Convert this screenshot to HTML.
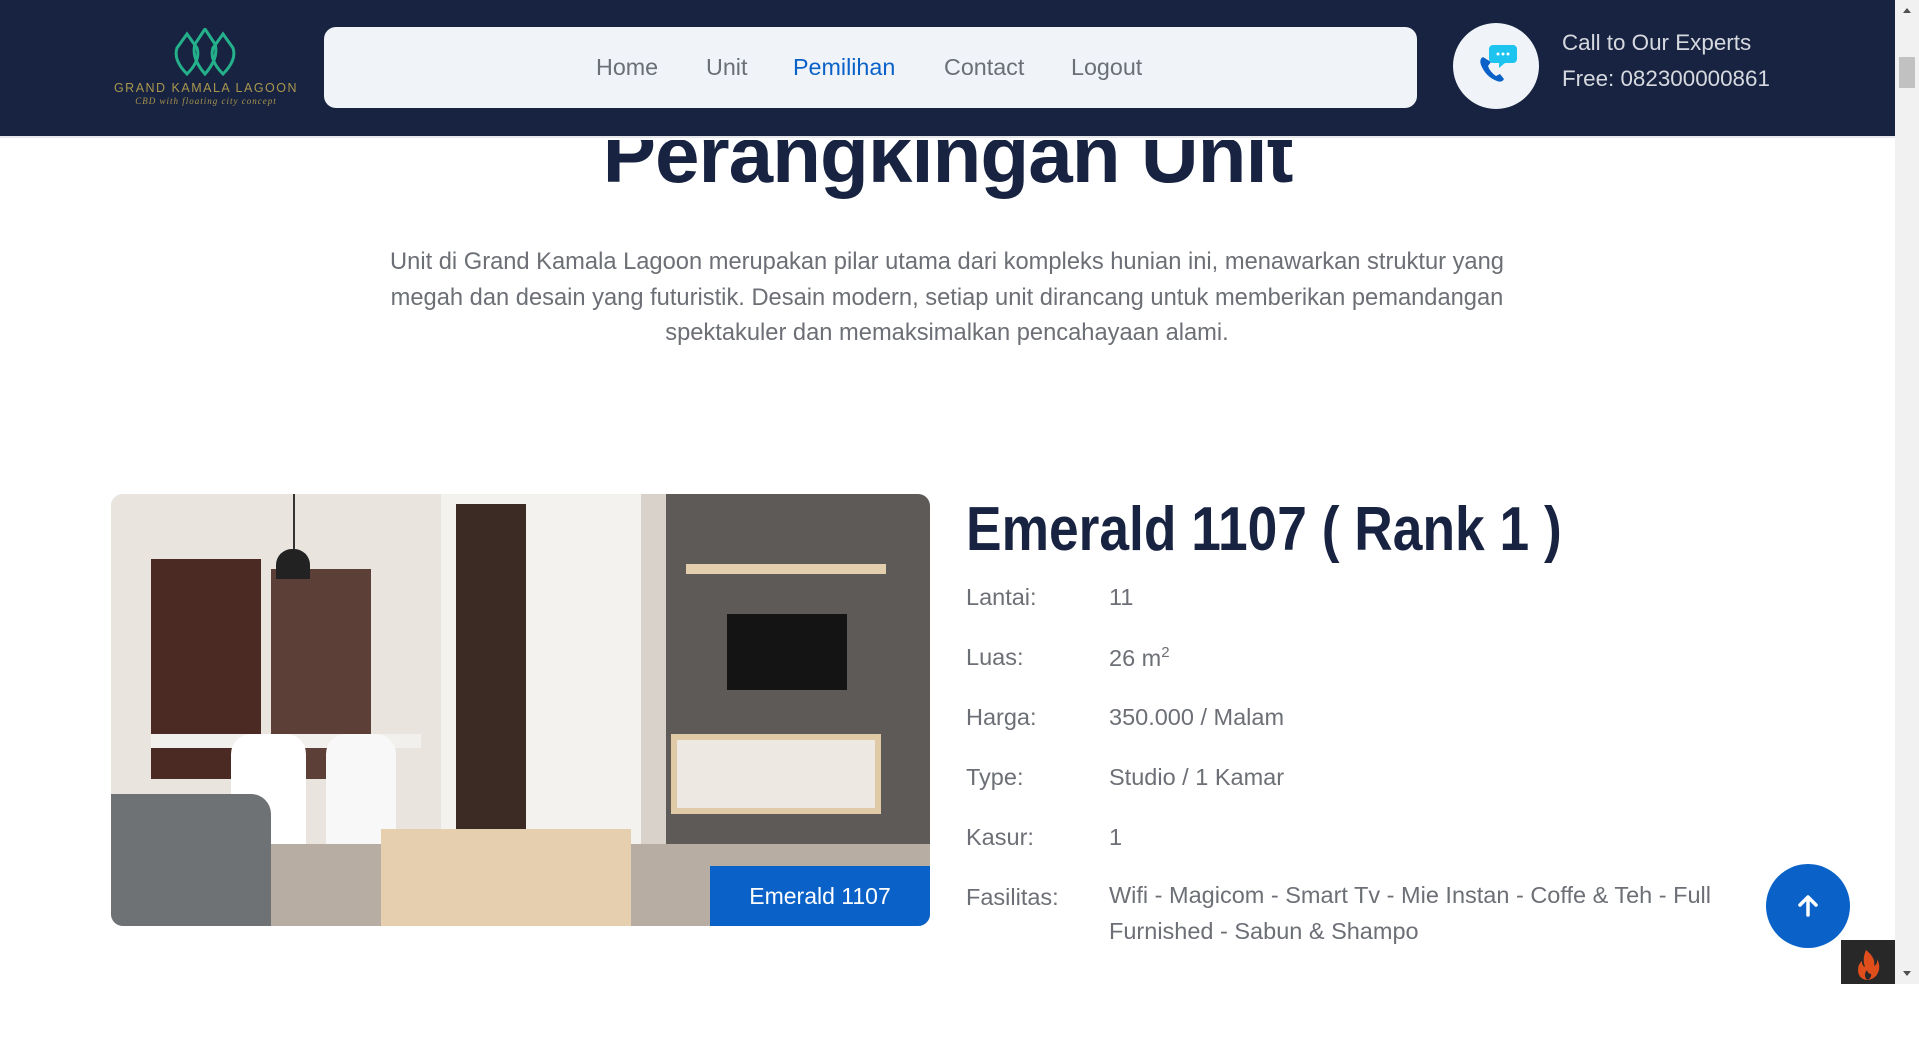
<!DOCTYPE html>
<html><head><meta charset="utf-8"><style>
*{margin:0;padding:0;box-sizing:border-box}
body{width:1919px;height:984px;overflow:hidden;background:#fff;font-family:"Liberation Sans",sans-serif;position:relative}
.hdr{position:absolute;left:0;top:0;width:1895px;height:138px;background:#172340;border-bottom:2px solid #e6e8ec}
.nav{position:absolute;left:324px;top:27px;width:1093px;height:81px;background:#f0f4f9;border-radius:12px}
.nav span{position:absolute;top:27px;font-size:23.3px;color:#6b6f76}
.phone{position:absolute;left:1453px;top:23px;width:86px;height:86px;border-radius:50%;background:#f0f4f9}
.call{position:absolute;left:1562px;color:#d6d9df;font-size:22.4px}
.title{position:absolute;left:0;width:1895px;text-align:center;font-size:80px;font-weight:bold;color:#172340;letter-spacing:-1px}
.para{position:absolute;left:367px;width:1160px;top:245px;text-align:center;font-size:23.7px;line-height:35.5px;color:#6c6f75}
.img{position:absolute;left:111px;top:494px;width:819px;height:432px;border-radius:12px;overflow:hidden;background:#d8d2cb}
.lbl{position:absolute;right:0;bottom:0;width:220px;height:60px;background:#0a62c9;color:#fff;font-size:23px;text-align:center;line-height:60px}
.h2{position:absolute;left:966px;top:494px;font-size:62px;font-weight:bold;color:#172340;transform:scaleX(0.86);transform-origin:0 0;white-space:nowrap}
.row{position:absolute;font-size:23.5px;color:#6c6f75}
.up{position:absolute;left:1766px;top:864px;width:84px;height:84px;border-radius:50%;background:#0a62c9}
</style></head><body>
<div class="hdr">
 <svg style="position:absolute;left:168px;top:28px" width="74" height="50" viewBox="0 0 70 50">
  <g fill="none" stroke="#25b08c" stroke-width="3">
   <path d="M17 6 L7 20 Q3 32 17 46 Q31 32 27 20 Z"/>
   <path d="M35 1 L25 16 Q21 30 35 46 Q49 30 45 16 Z"/>
   <path d="M53 6 L43 20 Q39 32 53 46 Q67 32 63 20 Z"/>
  </g></svg>
 <div style="position:absolute;left:96px;top:81px;width:220px;text-align:center;font-size:12.5px;letter-spacing:1.5px;color:#a9964e;white-space:nowrap">GRAND KAMALA LAGOON</div>
 <div style="position:absolute;left:106px;top:96px;width:200px;text-align:center;font-size:9px;font-style:italic;letter-spacing:1px;color:#a9964e;font-family:'Liberation Serif',serif;white-space:nowrap">CBD with floating city concept</div>
 <div class="nav">
  <span style="left:272px">Home</span><span style="left:382px">Unit</span><span style="left:469px;color:#0a62c9">Pemilihan</span><span style="left:620px">Contact</span><span style="left:747px">Logout</span>
 </div>
 <div class="phone"><svg style="position:absolute;left:24px;top:20px" width="42" height="44" viewBox="0 0 42 44">
  <path d="M6 14 Q2 16 4 22 Q9 34 20 38 Q25 40 27 36 L23 31 L19 33 Q13 29 11 23 L14 19 Z" fill="#0a62c9"/>
  <path d="M16 2 h20 a4 4 0 0 1 4 4 v10 a4 4 0 0 1 -4 4 h-8 l-6 5 v-5 h-6 a4 4 0 0 1 -4 -4 v-10 a4 4 0 0 1 4 -4z" fill="#1ec4f0"/>
  <circle cx="21" cy="11" r="1.5" fill="#fff"/><circle cx="26" cy="11" r="1.5" fill="#fff"/><circle cx="31" cy="11" r="1.5" fill="#fff"/></svg></div>
 <div class="call" style="top:30px">Call to Our Experts</div>
 <div class="call" style="top:66px">Free: 082300000861</div>
</div>
<div style="position:absolute;left:0;top:140px;width:1895px;height:900px;overflow:hidden">
 <div class="title" style="top:-31px">Perangkingan Unit</div>
</div>
<div class="para">Unit di Grand Kamala Lagoon merupakan pilar utama dari kompleks hunian ini, menawarkan struktur yang megah dan desain yang futuristik. Desain modern, setiap unit dirancang untuk memberikan pemandangan spektakuler dan memaksimalkan pencahayaan alami.</div>
<div class="img">
 <div style="position:absolute;left:0;top:0;width:420px;height:432px;background:#e9e4de"></div>
 <div style="position:absolute;left:40px;top:65px;width:110px;height:220px;background:#4a2a22"></div>
 <div style="position:absolute;left:160px;top:75px;width:100px;height:210px;background:#5c3f36"></div>
 <div style="position:absolute;left:330px;top:0;width:200px;height:432px;background:#f4f2ee"></div>
 <div style="position:absolute;left:345px;top:10px;width:70px;height:330px;background:#3c2a24"></div>
 <div style="position:absolute;left:555px;top:0;width:264px;height:432px;background:#5e5a57"></div>
 <div style="position:absolute;left:616px;top:120px;width:120px;height:76px;background:#141414"></div>
 <div style="position:absolute;left:575px;top:70px;width:200px;height:10px;background:#e3cfae"></div>
 <div style="position:absolute;left:560px;top:240px;width:210px;height:80px;background:#ede8e2;border:6px solid #e0c9a5"></div>
 <div style="position:absolute;left:40px;top:240px;width:270px;height:14px;background:#f2f0ec"></div>
 <div style="position:absolute;left:120px;top:240px;width:75px;height:120px;background:#fff;border-radius:20px 20px 0 0"></div>
 <div style="position:absolute;left:215px;top:240px;width:70px;height:115px;background:#f8f8f8;border-radius:20px 20px 0 0"></div>
 <div style="position:absolute;left:0;top:350px;width:819px;height:82px;background:#b8ada2"></div>
 <div style="position:absolute;left:0;top:300px;width:160px;height:132px;background:#6f7275;border-radius:0 20px 0 0"></div>
 <div style="position:absolute;left:270px;top:335px;width:250px;height:97px;background:#e5cfae"></div>
 <div style="position:absolute;left:182px;top:0;width:2px;height:60px;background:#333"></div>
 <div style="position:absolute;left:165px;top:55px;width:34px;height:30px;background:#222;border-radius:16px 16px 0 0"></div>
 <div class="lbl">Emerald 1107</div>
</div>
<div class="h2">Emerald 1107 ( Rank 1 )</div>
<div class="row" style="left:966px;top:584px">Lantai:</div><div class="row" style="left:1109px;top:584px">11</div>
<div class="row" style="left:966px;top:644px">Luas:</div><div class="row" style="left:1109px;top:644px">26 m<sup style="font-size:15px">2</sup></div>
<div class="row" style="left:966px;top:704px">Harga:</div><div class="row" style="left:1109px;top:704px">350.000 / Malam</div>
<div class="row" style="left:966px;top:764px">Type:</div><div class="row" style="left:1109px;top:764px">Studio / 1 Kamar</div>
<div class="row" style="left:966px;top:824px">Kasur:</div><div class="row" style="left:1109px;top:824px">1</div>
<div class="row" style="left:966px;top:884px">Fasilitas:</div><div class="row" style="left:1109px;width:650px;line-height:35.5px;top:878px">Wifi - Magicom - Smart Tv - Mie Instan - Coffe &amp; Teh - Full Furnished - Sabun &amp; Shampo</div>
<div class="up"><svg style="position:absolute;left:30px;top:30px" width="24" height="24" viewBox="0 0 24 24"><path d="M12 21V4M4 11l8-8 8 8" fill="none" stroke="#fff" stroke-width="3.5" stroke-linecap="round" stroke-linejoin="round"/></svg></div>
<div style="position:absolute;left:1841px;top:940px;width:54px;height:44px;background:#282828"><svg style="position:absolute;left:15px;top:10px" width="24" height="30" viewBox="0 0 24 30"><path d="M10 0 Q20 8 18 16 Q22 14 21 9 Q26 18 20 26 Q16 30 10 30 Q2 28 2 20 Q2 14 6 11 Q6 16 9 17 Q6 9 10 0Z M11 30 Q7 25 11 20 Q12 24 15 24 Q16 28 11 30Z" fill="#e04e1b" fill-rule="evenodd"/></svg></div>
<div style="position:absolute;left:1895px;top:0;width:24px;height:984px;background:#f1f1f1">
 <div style="position:absolute;left:4px;top:57px;width:16px;height:31px;background:#c1c1c1"></div>
 <div style="position:absolute;left:8px;top:8px;border-left:4px solid transparent;border-right:4px solid transparent;border-bottom:5px solid #505050"></div>
 <div style="position:absolute;left:8px;bottom:8px;border-left:4px solid transparent;border-right:4px solid transparent;border-top:5px solid #505050"></div>
</div>
</body></html>
